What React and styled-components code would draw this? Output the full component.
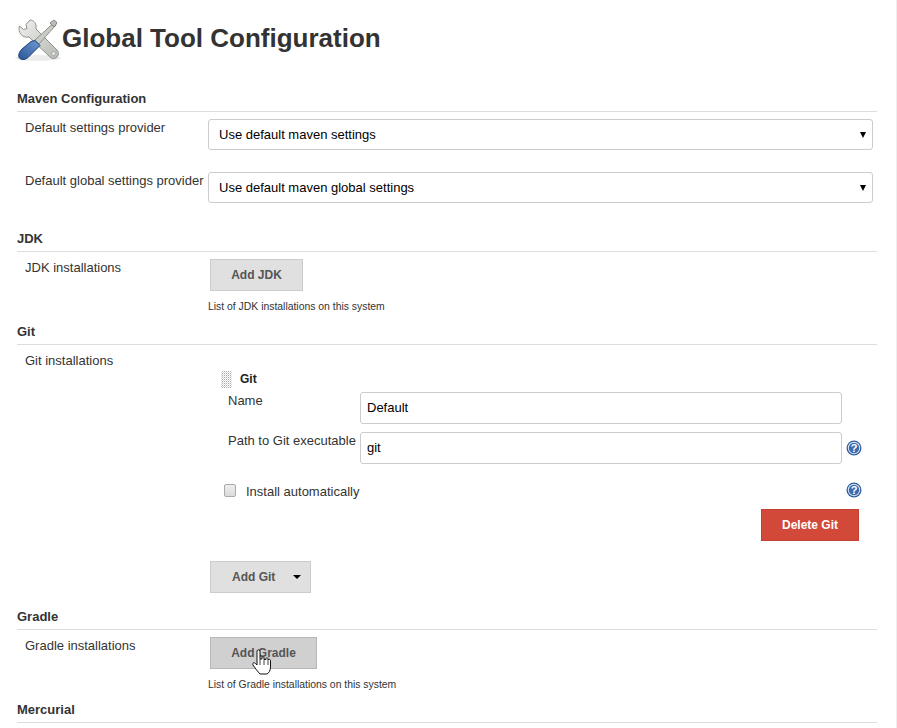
import styled, { createGlobalStyle } from 'styled-components'

const GlobalStyle = createGlobalStyle`
	html, body {
		margin: 0;
		height: 100%;
		overflow: hidden;
		background: #fff;
	}
	body {
		font-family: 'Liberation Sans', Arial, sans-serif;
		font-size: 13px;
		color: #333;
	}
`

const Page = styled.div`
	box-sizing: border-box;
	height: 728px;
	padding: 16px 19px 0 17px;
	border-right: 1px solid #eee;
	overflow: hidden;
`

const Title = styled.h1`
	display: flex;
	align-items: center;
	height: 44px;
	margin: 0 0 31px -3px;
	font-size: 26px;
	font-weight: bold;
	line-height: 44px;
	color: #333;
`

const SectionHead = styled.div`
	height: 20px;
	border-bottom: 1px solid #ddd;
	font-size: 13px;
	font-weight: bold;
	line-height: 15px;
	margin-top: ${(p) => p.$before ?? 0}px;
	margin-bottom: 7px;
`

const Row = styled.div`
	display: grid;
	grid-template-columns: 183px 1fr;
	padding-left: 8px;
	margin-bottom: ${(p) => p.$after ?? 0}px;
`

const Label = styled.div`
	padding-top: 1px;
	line-height: 15px;
	white-space: nowrap;
`

const SelectWrap = styled.div`
	position: relative;
	margin-right: 4px;

	&::after {
		content: '';
		position: absolute;
		right: 7px;
		top: 13px;
		border-left: 3.5px solid transparent;
		border-right: 3.5px solid transparent;
		border-top: 6px solid #000;
	}
`

const Select = styled.select`
	display: block;
	box-sizing: border-box;
	width: 100%;
	height: 31px;
	padding: 0 10px;
	border: 1px solid #ccc;
	border-radius: 3px;
	background: #fff;
	appearance: none;
	font: 13px 'Liberation Sans', Arial, sans-serif;
	color: #000;
`

const Button = styled.button`
	display: block;
	box-sizing: border-box;
	width: ${(p) => p.$width}px;
	height: 32px;
	margin-left: 2px;
	padding: 0;
	border: 1px solid #ccc;
	background: ${(p) => (p.$hover ? '#d0d0d0' : '#e0e0e0')};
	border-color: ${(p) => (p.$hover ? '#b8b8b8' : '#ccc')};
	font: bold 12px 'Liberation Sans', Arial, sans-serif;
	color: #555;
`

const SplitButton = styled(Button)`
	display: flex;
	align-items: center;
	padding-left: 21px;
	gap: 18px;
`

const Caret = styled.span`
	border-left: 4px solid transparent;
	border-right: 4px solid transparent;
	border-top: 4px solid #000;
`

const HoverSpot = styled.div`
	position: relative;
	width: 109px;
`

const Pointer = styled.svg`
	position: absolute;
	left: 44px;
	top: 12px;
`

const HelpText = styled.div`
	margin-top: 10px;
	font-size: 10.4px;
	line-height: 12px;
	height: 12px;
`

const Chunk = styled.div`
	padding-left: 12px;
	padding-top: 18px;
	margin-right: 15px;
`

const ChunkHead = styled.div`
	display: flex;
	align-items: center;
	gap: 8px;
	height: 18px;
	margin-bottom: 4px;
	font-weight: bold;
	font-size: 12px;
	color: #222;
`

const Grip = styled.span`
	width: 11px;
	height: 17px;
	margin-left: 1px;
	background-image: conic-gradient(#aaa 25%, transparent 0 50%, #ddd 0 75%, transparent 0);
	background-size: 2px 2px;
`

const FieldRow = styled.div`
	display: grid;
	grid-template-columns: 132px 482px 20px;
	padding-left: 8px;
	margin-bottom: 8px;
	align-items: start;
`

const Input = styled.input`
	display: block;
	box-sizing: border-box;
	width: 100%;
	height: 32px;
	padding: 0 6px 2px;
	border: 1px solid #ccc;
	border-radius: 3px;
	font: 13px 'Liberation Sans', Arial, sans-serif;
	color: #000;
`

const HelpIcon = styled.svg`
	display: block;
	margin: 8px 0 0 4px;
`

const CheckRow = styled.div`
	display: flex;
	align-items: center;
	height: 18px;
	margin-top: 18px;
	padding-left: 4px;
`

const Checkbox = styled.span`
	box-sizing: border-box;
	width: 12px;
	height: 13px;
	margin-top: -1px;
	border: 1px solid #aaa;
	border-radius: 2px;
	background: linear-gradient(#eee, #dcdcdc);
	margin-right: 10px;
`

const CheckLabel = styled.span`
	flex: 1;
`

const CheckHelp = styled(HelpIcon)`
	margin: -2px 0 0;
`

const DangerRow = styled.div`
	display: flex;
	justify-content: flex-end;
	margin: 9px 3px 20px 0;
`

const DangerButton = styled.button`
	box-sizing: border-box;
	width: 98px;
	height: 32px;
	padding: 0;
	border: 1px solid #c33f2f;
	background: #d24939;
	font: bold 12px 'Liberation Sans', Arial, sans-serif;
	color: #fff;
`

const Help = () => (
	<>
		<circle cx="8" cy="8" r="7.5" fill="#2f5e9e" />
		<circle cx="8" cy="8" r="6.2" fill="#dfe8f3" />
		<circle cx="8" cy="8" r="5.2" fill="#3a6cb0" />
		<text
			x="8"
			y="11.8"
			textAnchor="middle"
			fontSize="11"
			fontWeight="bold"
			fontFamily="'Liberation Sans', sans-serif"
			fill="#fff"
		>
			?
		</text>
	</>
)

const ToolsIcon = () => (
	<svg width="48" height="48" viewBox="0 0 48 48">
		<defs>
			<linearGradient id="steel" x1="0" y1="0" x2="1" y2="1">
				<stop offset="0" stopColor="#f2f2f0" />
				<stop offset="1" stopColor="#b4b7b1" />
			</linearGradient>
			<linearGradient id="handle" x1="0" y1="1" x2="1" y2="0">
				<stop offset="0" stopColor="#2a5596" />
				<stop offset="1" stopColor="#6d9bd3" />
			</linearGradient>
		</defs>
		<ellipse cx="24" cy="44" rx="23" ry="3" fill="#000" opacity="0.08" />
		<path
			d="M16 6 L12 10.5 L13 14.5 L9.5 15.5 L5.5 12 C3.5 18 8 24.5 15 23 L36 43 C38 45 41 45 43 43 C45 41 45 38 43 36 L22 15 C23 10 20 6 16 6 Z"
			fill="url(#steel)"
			stroke="#8f928c"
			strokeWidth="1"
			strokeLinejoin="round"
		/>
		<circle cx="39.5" cy="39.5" r="1.6" fill="#fff" stroke="#8f928c" strokeWidth="0.6" />
		<path d="M21 26 L38.5 10 L41 12 L25 30 Z" fill="#c9ccc6" stroke="#777a75" strokeWidth="0.8" />
		<path d="M36 9 L40 6 L43 8.5 L41 12.5 L38.5 12 Z" fill="#babdb6" stroke="#6f726d" strokeWidth="0.8" />
		<path
			d="M21 26.5 L26 31.5 L14 43.5 C10.5 46.5 6.5 46 5 43.5 C4 41 5 38 8 35 L17 27.5 Z"
			fill="url(#handle)"
			stroke="#1f3f73"
			strokeWidth="1"
			strokeLinejoin="round"
		/>
	</svg>
)

const HandCursor = () => (
	<Pointer width="20" height="26" viewBox="0 0 20 26">
		<path
			d="M5 2 C5 0.5 8 0.5 8 2 L8 10 L10 10 L10 8.5 C10 7.5 12 7.5 12 8.5 L12 10.5 L14 10.5 L14 9.5 C14 8.5 16 8.5 16 9.5 L16 11 C16.5 10 18.5 10 18.5 11.5 L18.5 18 C18.5 21 17 24 15 25 L8 25 C6 23 3 19 1 16 C0 14 2 13 3.5 14.5 L5 16 Z"
			fill="#fff"
			stroke="#111"
			strokeWidth="1"
			strokeLinejoin="round"
		/>
		<path d="M8 10 L8 16 M12 10.5 L12 16 M16 11 L16 16" stroke="#111" strokeWidth="0.8" />
	</Pointer>
)

const App = () => {
	return (
		<Page>
			<GlobalStyle />
			<Title>
				<ToolsIcon />
				Global Tool Configuration
			</Title>

			<SectionHead>Maven Configuration</SectionHead>
			<Row $after={22}>
				<Label>Default settings provider</Label>
				<SelectWrap>
					<Select defaultValue="a">
						<option value="a">Use default maven settings</option>
					</Select>
				</SelectWrap>
			</Row>
			<Row $after={28}>
				<Label>Default global settings provider</Label>
				<SelectWrap>
					<Select defaultValue="a">
						<option value="a">Use default maven global settings</option>
					</Select>
				</SelectWrap>
			</Row>

			<SectionHead>JDK</SectionHead>
			<Row $after={11}>
				<Label>JDK installations</Label>
				<div>
					<Button $width={93}>Add JDK</Button>
					<HelpText>List of JDK installations on this system</HelpText>
				</div>
			</Row>

			<SectionHead>Git</SectionHead>
			<Row>
				<Label>Git installations</Label>
				<div>
					<Chunk>
						<ChunkHead>
							<Grip />
							Git
						</ChunkHead>
						<FieldRow>
							<Label>Name</Label>
							<Input defaultValue="Default" />
						</FieldRow>
						<FieldRow>
							<Label>Path to Git executable</Label>
							<Input defaultValue="git" />
							<HelpIcon width="16" height="16" viewBox="0 0 16 16">
								<Help />
							</HelpIcon>
						</FieldRow>
						<CheckRow>
							<Checkbox />
							<CheckLabel>Install automatically</CheckLabel>
							<CheckHelp width="16" height="16" viewBox="0 0 16 16">
								<Help />
							</CheckHelp>
						</CheckRow>
						<DangerRow>
							<DangerButton>Delete Git</DangerButton>
						</DangerRow>
					</Chunk>
					<SplitButton $width={101}>
						Add Git
						<Caret />
					</SplitButton>
				</div>
			</Row>

			<SectionHead $before={16}>Gradle</SectionHead>
			<Row $after={11}>
				<Label>Gradle installations</Label>
				<div>
					<HoverSpot>
						<Button $width={107} $hover>
							Add Gradle
						</Button>
						<HandCursor />
					</HoverSpot>
					<HelpText>List of Gradle installations on this system</HelpText>
				</div>
			</Row>

			<SectionHead>Mercurial</SectionHead>
		</Page>
	)
}

export default App
